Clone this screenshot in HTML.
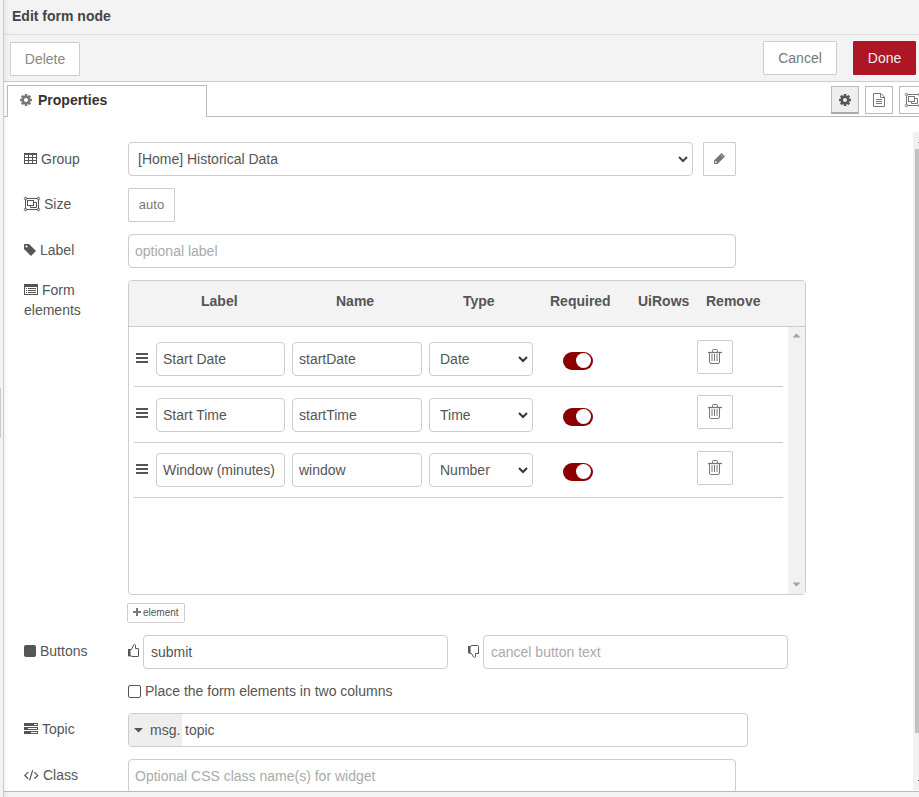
<!DOCTYPE html>
<html><head><meta charset="utf-8">
<style>
*{box-sizing:border-box;margin:0;padding:0}
html,body{width:919px;height:797px;overflow:hidden;background:#f3f3f3;font-family:"Liberation Sans",sans-serif;font-size:14px;color:#555}
.abs{position:absolute}
svg{position:absolute;overflow:visible}
#tray{position:absolute;left:3px;top:0;width:916px;height:797px;border-left:1px solid #ccc;background:#fff}
#hdr{position:absolute;left:4px;top:0;width:915px;height:35px;background:#f3f3f3;border-bottom:1px solid #ddd}
#title{position:absolute;left:8px;top:7px;font-weight:bold;color:#444;font-size:14px;line-height:18px}
#tb{position:absolute;left:4px;top:35px;width:915px;height:47px;background:#f3f3f3;border-bottom:1px solid #ccc}
.btn{position:absolute;border:1px solid #ccc;background:#fff;color:#555;text-align:center;line-height:32px;font-size:14px;border-radius:1px}
.primary{background:#ad1625;border-color:#ad1625;color:#eee}
#tabs{position:absolute;left:4px;top:82px;width:915px;height:35px;background:#fff}
#tabline{position:absolute;left:4px;top:116px;width:915px;height:1px;background:#bbb}
#tab{position:absolute;left:7px;top:85px;width:200px;height:32px;border:1px solid #bbb;border-bottom:none;background:#fff;font-weight:bold;color:#333}
.tbtn{position:absolute;top:86px;width:28px;height:28px;border:1px solid #bbb;background:#fff}
.lbl{position:absolute;left:24px;color:#555;line-height:20px;white-space:nowrap}
.inp{position:absolute;border:1px solid #ccc;border-radius:4px;background:#fff;height:34px;line-height:32px;padding-left:9px;color:#555;white-space:nowrap;overflow:hidden}
.ph{color:#aaa}
.th{position:absolute;top:291px;font-weight:bold;color:#555;line-height:20px;white-space:nowrap}
.sep{position:absolute;left:134px;width:649px;height:1px;background:#ccc}
.cin{position:absolute;height:34px;border:1px solid #ccc;border-radius:4px;background:#fff;line-height:32px;padding-left:6px;color:#555;white-space:nowrap}
.tog{position:absolute;left:563px;width:30px;height:18px;border-radius:9px;background:#8b0000}
.tog:after{content:"";position:absolute;left:13px;top:1px;width:15px;height:15px;border-radius:50%;background:#fff}
.trash{position:absolute;left:697px;width:36px;height:34px;border:1px solid #ccc;border-radius:2px;background:#fff}
#scroll{position:absolute;left:913px;top:132px;width:6px;height:658px;background:#f1f1f1}
#thumb{position:absolute;left:915px;top:149px;width:4px;height:584px;background:#c1c1c1}
#bottom{position:absolute;left:4px;top:791px;width:915px;height:6px;background:#f3f3f3;border-top:1px solid #bbb}
</style></head><body>

<div id="tray"></div>
<div id="hdr"><div id="title">Edit form node</div></div>
<div id="tb"></div>
<div class="btn" style="left:10px;top:42px;width:70px;height:34px;color:#888">Delete</div>
<div class="btn" style="left:763px;top:41px;width:74px;height:34px;color:#777">Cancel</div>
<div class="btn primary" style="left:853px;top:41px;width:63px;height:34px">Done</div>
<div id="tabs"></div>
<div id="tabline"></div>
<div id="tab"><span class="abs" style="left:30px;top:5px;line-height:18px">Properties</span></div>
<svg style="left:26px;top:100px" width="1" height="1"><path fill-rule="evenodd" fill="#777" transform="scale(0.87)" d="M4.98,-1.51 L6.84,-1.50 L6.84,1.50 L4.98,1.51 L4.59,2.45 L5.90,3.77 L3.77,5.90 L2.45,4.59 L1.51,4.98 L1.50,6.84 L-1.50,6.84 L-1.51,4.98 L-2.45,4.59 L-3.77,5.90 L-5.90,3.77 L-4.59,2.45 L-4.98,1.51 L-6.84,1.50 L-6.84,-1.50 L-4.98,-1.51 L-4.59,-2.45 L-5.90,-3.77 L-3.77,-5.90 L-2.45,-4.59 L-1.51,-4.98 L-1.50,-6.84 L1.50,-6.84 L1.51,-4.98 L2.45,-4.59 L3.77,-5.90 L5.90,-3.77 L4.59,-2.45 Z M2.30,0 A2.30,2.30 0 1,0 -2.30,0 A2.30,2.30 0 1,0 2.30,0 Z"/></svg>
<div class="tbtn" style="left:831px;background:#eee;border-bottom:2px solid #aaa"></div>
<svg style="left:845px;top:100px" width="1" height="1"><path fill-rule="evenodd" fill="#555" transform="scale(0.87)" d="M4.98,-1.51 L6.84,-1.50 L6.84,1.50 L4.98,1.51 L4.59,2.45 L5.90,3.77 L3.77,5.90 L2.45,4.59 L1.51,4.98 L1.50,6.84 L-1.50,6.84 L-1.51,4.98 L-2.45,4.59 L-3.77,5.90 L-5.90,3.77 L-4.59,2.45 L-4.98,1.51 L-6.84,1.50 L-6.84,-1.50 L-4.98,-1.51 L-4.59,-2.45 L-5.90,-3.77 L-3.77,-5.90 L-2.45,-4.59 L-1.51,-4.98 L-1.50,-6.84 L1.50,-6.84 L1.51,-4.98 L2.45,-4.59 L3.77,-5.90 L5.90,-3.77 L4.59,-2.45 Z M2.30,0 A2.30,2.30 0 1,0 -2.30,0 A2.30,2.30 0 1,0 2.30,0 Z"/></svg>
<div class="tbtn" style="left:865px"></div>
<svg style="left:873px;top:93px" width="12" height="14" viewBox="0 0 12 14"><path d="M0.5,0.5 H8 L11.5,4 V13.5 H0.5 Z M7.5,0.5 V4.5 H11.5" fill="none" stroke="#777" stroke-width="1"/><path d="M3,6.5 H9 M3,8.5 H9 M3,10.5 H9" stroke="#777" stroke-width="1"/></svg>
<div class="tbtn" style="left:899px"></div>
<svg style="left:905px;top:92px" width="16" height="16" viewBox="0 0 16 16"><rect x="1.5" y="2.5" width="13" height="11" fill="none" stroke="#777"/><circle cx="1.5" cy="2.5" r="1.2" fill="#fff" stroke="#777" stroke-width="1"/><circle cx="14.5" cy="2.5" r="1.2" fill="#fff" stroke="#777" stroke-width="1"/><circle cx="1.5" cy="13.5" r="1.2" fill="#fff" stroke="#777" stroke-width="1"/><circle cx="14.5" cy="13.5" r="1.2" fill="#fff" stroke="#777" stroke-width="1"/><rect x="3.5" y="4.5" width="6" height="5" fill="none" stroke="#777"/><path d="M9.5,6.5 H12.5 V11.5 H6.5 V9.5" fill="none" stroke="#777"/></svg>

<!-- Group -->
<svg style="left:24px;top:153px" width="13" height="11" viewBox="0 0 13 11"><rect x="0" y="0" width="13" height="2" fill="#555"/><rect x="0.5" y="0.5" width="12" height="10" fill="none" stroke="#555"/><path d="M0,4.5 H13 M0,7.5 H13 M4.5,2 V11 M8.5,2 V11" stroke="#555"/></svg>
<div class="lbl" style="top:149px;left:41px">Group</div>
<div class="inp" style="left:128px;top:142px;width:565px">[Home] Historical Data</div>
<svg style="left:678px;top:156px" width="10" height="7" viewBox="0 0 10 7"><path d="M1,1 L5,5 L9,1" fill="none" stroke="#444" stroke-width="2"/></svg>
<div class="btn" style="left:703px;top:142px;width:33px;height:34px"></div>
<svg style="left:712px;top:151px" width="14" height="14" viewBox="0 0 14 14"><path d="M2,13 L2,9.5 L9.5,2 L13,5.5 L5.5,13 Z" fill="#777"/><path d="M8.6,3.6 L11.4,6.4" stroke="#fff" stroke-width="0.6" opacity="0.6"/><circle cx="3.9" cy="11.1" r="0.9" fill="#fff"/></svg>
<!-- Size -->
<svg style="left:24px;top:196px" width="16" height="16" viewBox="0 0 16 16"><rect x="1.5" y="2.5" width="13" height="11" fill="none" stroke="#555"/><circle cx="1.5" cy="2.5" r="1.2" fill="#fff" stroke="#555" stroke-width="1"/><circle cx="14.5" cy="2.5" r="1.2" fill="#fff" stroke="#555" stroke-width="1"/><circle cx="1.5" cy="13.5" r="1.2" fill="#fff" stroke="#555" stroke-width="1"/><circle cx="14.5" cy="13.5" r="1.2" fill="#fff" stroke="#555" stroke-width="1"/><rect x="3.5" y="4.5" width="6" height="5" fill="none" stroke="#555"/><path d="M9.5,6.5 H12.5 V11.5 H6.5 V9.5" fill="none" stroke="#555"/></svg>
<div class="lbl" style="top:194px;left:44px">Size</div>
<div class="btn" style="left:128px;top:188px;width:47px;height:34px;font-size:13px;color:#777">auto</div>
<!-- Label -->
<svg style="left:24px;top:244px" width="12" height="12" viewBox="0 0 12 12"><path d="M0,0.8 Q0,0 0.8,0 L5,0 L11.5,6.5 Q12,7 11.5,7.5 L7.5,11.5 Q7,12 6.5,11.5 L0,5 Z" fill="#555"/><circle cx="2.5" cy="2.5" r="1.1" fill="#fff"/></svg>
<div class="lbl" style="top:240px;left:40px">Label</div>
<div class="inp ph" style="left:128px;top:234px;width:608px;padding-left:6px">optional label</div>
<!-- Form elements -->
<svg style="left:24px;top:284px" width="14" height="11" viewBox="0 0 14 11"><rect x="0" y="0" width="14" height="3" fill="#555"/><rect x="0.5" y="0.5" width="13" height="10" fill="none" stroke="#555"/><path d="M2,4.5 H3 M2,6.5 H3 M2,8.5 H3 M4,4.5 H12 M4,6.5 H12 M4,8.5 H12" stroke="#555"/></svg>
<div class="lbl" style="top:280px"><span style="margin-left:18px">Form</span><br>elements</div>
<div class="abs" style="left:128px;top:280px;width:678px;height:315px;border:1px solid #ccc;border-radius:4px;background:#fff"></div>
<div class="abs" style="left:129px;top:281px;width:676px;height:46px;background:#f3f3f3;border-radius:3px 3px 0 0;border-bottom:1px solid #ccc"></div>
<div class="th" style="left:201px">Label</div>
<div class="th" style="left:336px">Name</div>
<div class="th" style="left:463px">Type</div>
<div class="th" style="left:550px">Required</div>
<div class="th" style="left:638px">UiRows</div>
<div class="th" style="left:706px">Remove</div>
<!-- inner scrollbar -->
<div class="abs" style="left:788px;top:327px;width:17px;height:267px;background:#f1f1f1"></div>
<svg style="left:792px;top:333px" width="9" height="5" viewBox="0 0 9 5"><path d="M0.5,4.5 L4.5,0.5 L8.5,4.5 Z" fill="#a3a3a3"/></svg>
<svg style="left:792px;top:582px" width="9" height="5" viewBox="0 0 9 5"><path d="M0.5,0.5 L4.5,4.5 L8.5,0.5 Z" fill="#a3a3a3"/></svg>

<!-- rows -->
<svg style="left:136px;top:353px" width="12" height="10" viewBox="0 0 12 10" fill="#555"><rect x="0" y="0" width="12" height="2"/><rect x="0" y="4" width="12" height="2"/><rect x="0" y="8" width="12" height="2"/></svg>
<div class="cin" style="left:156px;top:342px;width:129px">Start Date</div>
<div class="cin" style="left:292px;top:342px;width:130px">startDate</div>
<div class="cin" style="left:429px;top:342px;width:104px;padding-left:10px">Date</div>
<svg style="left:518px;top:356px" width="10" height="7" viewBox="0 0 10 7"><path d="M1,1 L5,5 L9,1" fill="none" stroke="#333" stroke-width="2"/></svg>
<div class="tog" style="top:352px"></div>
<div class="trash" style="top:340px"></div>
<svg style="left:707px;top:348px" width="16" height="17" viewBox="0 0 16 17"><g fill="none" stroke="#777" stroke-width="1"><path d="M1,4.5 H15" stroke-width="1.3"/><path d="M5.5,4 V2.5 Q5.5,1.5 6.5,1.5 H9.5 Q10.5,1.5 10.5,2.5 V4"/><path d="M2.5,5 V14 Q2.5,15.5 4,15.5 H11 Q12.5,15.5 12.5,14 V5"/><path d="M5,6 V13 M7.5,6 V13 M10,6 V13"/></g></svg>
<div class="sep" style="top:386px"></div>

<svg style="left:136px;top:408px" width="12" height="10" viewBox="0 0 12 10" fill="#555"><rect x="0" y="0" width="12" height="2"/><rect x="0" y="4" width="12" height="2"/><rect x="0" y="8" width="12" height="2"/></svg>
<div class="cin" style="left:156px;top:398px;width:129px">Start Time</div>
<div class="cin" style="left:292px;top:398px;width:130px">startTime</div>
<div class="cin" style="left:429px;top:398px;width:104px;padding-left:10px">Time</div>
<svg style="left:518px;top:412px" width="10" height="7" viewBox="0 0 10 7"><path d="M1,1 L5,5 L9,1" fill="none" stroke="#333" stroke-width="2"/></svg>
<div class="tog" style="top:408px"></div>
<div class="trash" style="top:395px"></div>
<svg style="left:707px;top:403px" width="16" height="17" viewBox="0 0 16 17"><g fill="none" stroke="#777" stroke-width="1"><path d="M1,4.5 H15" stroke-width="1.3"/><path d="M5.5,4 V2.5 Q5.5,1.5 6.5,1.5 H9.5 Q10.5,1.5 10.5,2.5 V4"/><path d="M2.5,5 V14 Q2.5,15.5 4,15.5 H11 Q12.5,15.5 12.5,14 V5"/><path d="M5,6 V13 M7.5,6 V13 M10,6 V13"/></g></svg>
<div class="sep" style="top:442px"></div>

<svg style="left:136px;top:464px" width="12" height="10" viewBox="0 0 12 10" fill="#555"><rect x="0" y="0" width="12" height="2"/><rect x="0" y="4" width="12" height="2"/><rect x="0" y="8" width="12" height="2"/></svg>
<div class="cin" style="left:156px;top:453px;width:129px">Window (minutes)</div>
<div class="cin" style="left:292px;top:453px;width:130px">window</div>
<div class="cin" style="left:429px;top:453px;width:104px;padding-left:10px">Number</div>
<svg style="left:518px;top:467px" width="10" height="7" viewBox="0 0 10 7"><path d="M1,1 L5,5 L9,1" fill="none" stroke="#333" stroke-width="2"/></svg>
<div class="tog" style="top:463px"></div>
<div class="trash" style="top:451px"></div>
<svg style="left:707px;top:459px" width="16" height="17" viewBox="0 0 16 17"><g fill="none" stroke="#777" stroke-width="1"><path d="M1,4.5 H15" stroke-width="1.3"/><path d="M5.5,4 V2.5 Q5.5,1.5 6.5,1.5 H9.5 Q10.5,1.5 10.5,2.5 V4"/><path d="M2.5,5 V14 Q2.5,15.5 4,15.5 H11 Q12.5,15.5 12.5,14 V5"/><path d="M5,6 V13 M7.5,6 V13 M10,6 V13"/></g></svg>
<div class="sep" style="top:497px"></div>

<!-- add element -->
<div class="btn" style="left:127px;top:603px;width:58px;height:20px;line-height:18px;font-size:10px;padding-left:15px;text-align:left;border-radius:2px">element</div>
<svg style="left:133px;top:608px" width="8" height="8" viewBox="0 0 8 8"><path d="M3,0 h2 v3 h3 v2 h-3 v3 h-2 v-3 h-3 v-2 h3 z" fill="#777"/></svg>

<!-- Buttons -->
<svg style="left:24px;top:645px" width="12" height="12" viewBox="0 0 12 12"><rect x="0" y="0" width="12" height="12" rx="2" fill="#555"/></svg>
<div class="lbl" style="top:641px;left:40px">Buttons</div>
<svg style="left:127px;top:644px" width="13" height="14" viewBox="0 0 13 14"><rect x="1" y="5" width="2" height="7" fill="#555"/><path d="M3,5.5 H4.5 L6.5,1 Q6.8,0.5 7.5,0.5 Q8.5,0.5 8.5,1.5 V4.5 H11 Q11.5,4.5 11.5,5 V12 Q11.5,12.5 11,12.5 H5 L3,11.5" fill="none" stroke="#555" stroke-width="1"/><path d="M1.5,5.5 H3 V12 H1.5 Z" fill="none" stroke="#555" stroke-width="1"/></svg>
<div class="inp" style="left:143px;top:635px;width:305px;padding-left:7px">submit</div>
<svg style="left:467px;top:644px" width="13" height="15" viewBox="0 0 13 15"><rect x="1" y="2" width="2" height="7" fill="#555"/><path d="M3,2.5 L5,1.5 H10.5 Q11.5,1.5 11.5,2.5 V9.5 H8.5 V12.5 Q8.5,13.5 7.5,13.5 Q6.8,13.5 6.5,13 L4.5,9.5 H3" fill="none" stroke="#555" stroke-width="1"/><path d="M1.5,2.5 H3 V9 H1.5 Z" fill="none" stroke="#555" stroke-width="1"/></svg>
<div class="inp ph" style="left:483px;top:635px;width:305px;padding-left:7px">cancel button text</div>
<!-- checkbox -->
<div class="abs" style="left:128px;top:685px;width:13px;height:13px;border:1px solid #555;border-radius:2px;background:#fff"></div>
<div class="abs" style="left:145px;top:681px;line-height:20px">Place the form elements in two columns</div>
<!-- Topic -->
<svg style="left:24px;top:723px" width="14" height="11" viewBox="0 0 14 11"><rect x="0" y="0" width="14" height="3" fill="#555"/><rect x="0" y="4" width="14" height="3" fill="#555"/><rect x="0" y="8" width="14" height="3" fill="#555"/><rect x="10" y="1" width="3" height="1" fill="#fff"/><rect x="4" y="5" width="9" height="1" fill="#fff"/><rect x="7" y="9" width="6" height="1" fill="#fff"/></svg>
<div class="lbl" style="top:719px;left:42px">Topic</div>
<div class="inp" style="left:128px;top:713px;width:620px;padding-left:56px">topic</div>
<div class="abs" style="left:129px;top:714px;width:53px;height:32px;background:#eee;border-radius:3px 0 0 3px"></div>
<svg style="left:134px;top:728px" width="9" height="5" viewBox="0 0 9 5"><path d="M0,0 h9 L4.5,4.5 z" fill="#555"/></svg>
<div class="abs" style="left:150px;top:720px;line-height:20px;color:#555">msg.</div>
<!-- Class -->
<svg style="left:24px;top:769px" width="15" height="12" viewBox="0 0 15 12"><path d="M4.3,3.1 L0.8,6.4 L4.3,9.7 M10.3,3.1 L13.8,6.4 L10.3,9.7 M8.7,1.1 L5.6,11.4" fill="none" stroke="#555" stroke-width="1.2"/></svg>
<div class="lbl" style="top:765px;left:43px">Class</div>
<div class="inp ph" style="left:128px;top:759px;width:608px;padding-left:6px">Optional CSS class name(s) for widget</div>

<div id="scroll"></div><div id="thumb"></div><div class="abs" style="left:918px;top:142px;width:1px;height:1px;background:#999"></div><div class="abs" style="left:918px;top:780px;width:1px;height:1px;background:#505050"></div>
<div id="bottom"></div>
<div class="abs" style="left:0;top:388px;width:1px;height:50px;background:#ccc"></div>
<div class="abs" style="left:4px;top:0;width:5px;height:797px;background:linear-gradient(to right,rgba(0,0,0,0.045),rgba(0,0,0,0))"></div>
</body></html>
